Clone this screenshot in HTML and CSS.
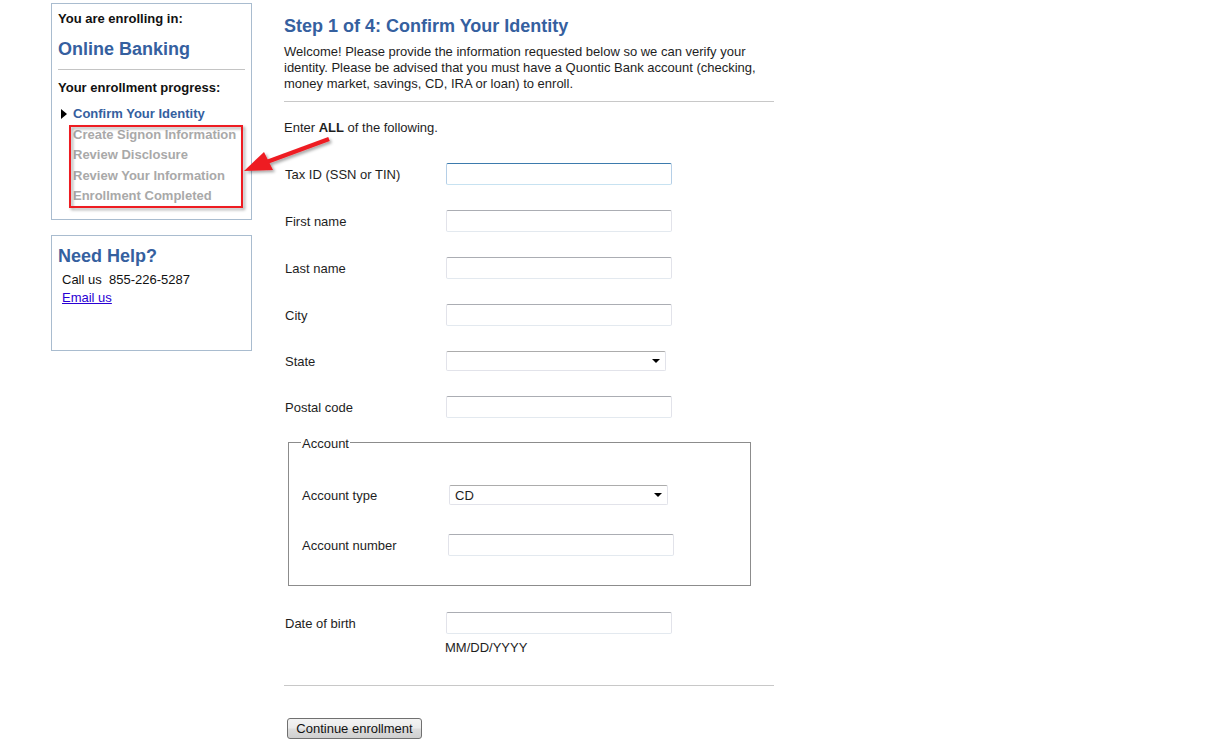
FILE: index.html
```html
<!DOCTYPE html>
<html>
<head>
<meta charset="utf-8">
<title>Enrollment - Confirm Your Identity</title>
<link rel="stylesheet" href="styles.css">
</head>
<body>
<div class="page">
  <aside class="sidebar">
    <div class="box progress-box">
      <div class="enroll-label">You are enrolling in:</div>
      <div class="product">Online Banking</div>
      <hr class="side-rule">
      <div class="progress-label">Your enrollment progress:</div>
      <ul class="steps">
        <li class="step current">Confirm Your Identity</li>
        <li class="step">Create Signon Information</li>
        <li class="step">Review Disclosure</li>
        <li class="step">Review Your Information</li>
        <li class="step">Enrollment Completed</li>
      </ul>
    </div>
    <div class="box help-box">
      <div class="help-title">Need Help?</div>
      <div class="help-line call">Call us&nbsp;&nbsp;855-226-5287</div>
      <div class="help-line"><a href="#" class="help-link">Email us</a></div>
    </div>
  </aside>

  <main class="main">
    <h1 class="title">Step 1 of 4: Confirm Your Identity</h1>
    <p class="intro">Welcome! Please provide the information requested below so we can verify your identity. Please be advised that you must have a Quontic Bank account (checking, money market, savings, CD, IRA or loan) to enroll.</p>
    <hr class="rule">
    <div class="enter">Enter <b>ALL</b> of the following.</div>

    <form class="form">
      <div class="row first">
        <label class="label">Tax ID (SSN or TIN)</label>
        <input class="text focus" type="text">
      </div>
      <div class="row">
        <label class="label">First name</label>
        <input class="text" type="text">
      </div>
      <div class="row">
        <label class="label">Last name</label>
        <input class="text" type="text">
      </div>
      <div class="row">
        <label class="label">City</label>
        <input class="text" type="text">
      </div>
      <div class="row">
        <label class="label">State</label>
        <div class="select state"><span class="select-value"></span><span class="caret"></span></div>
      </div>
      <div class="row">
        <label class="label">Postal code</label>
        <input class="text" type="text">
      </div>

      <fieldset class="account">
        <legend class="legend">Account</legend>
        <div class="frow first">
          <label class="flabel">Account type</label>
          <div class="select acct"><span class="select-value">CD</span><span class="caret"></span></div>
        </div>
        <div class="frow second">
          <label class="flabel">Account number</label>
          <input class="text acct-num" type="text">
        </div>
      </fieldset>

      <div class="row dob">
        <label class="label">Date of birth</label>
        <input class="text" type="text">
      </div>
      <div class="hint">MM/DD/YYYY</div>
      <hr class="rule bottom">
      <button type="button" class="btn">Continue enrollment</button>
    </form>
  </main>
</div>

<svg class="annotation" width="1208" height="750" viewBox="0 0 1208 750">
  <defs>
    <filter id="sh" x="-20%" y="-20%" width="140%" height="140%">
      <feDropShadow dx="2" dy="2" stdDeviation="1.5" flood-color="#000" flood-opacity="0.35"/>
    </filter>
  </defs>
  <g filter="url(#sh)">
    <rect x="70" y="126" width="172" height="81" fill="none" stroke="#ee1c24" stroke-width="2"/>
    <line x1="329" y1="139" x2="264" y2="163" stroke="#ee1c24" stroke-width="4.5"/>
    <polygon points="244,171 264,152 273,170" fill="#ee1c24"/>
  </g>
</svg>
</body>
</html>
```

FILE: styles.css
```css
html, body {
  margin: 0;
  padding: 0;
  background: #ffffff;
}

body {
  font-family: "Liberation Sans", Arial, sans-serif;
  font-size: 13px;
  color: #1e1e1e;
  position: relative;
  width: 1208px;
  height: 750px;
  overflow: hidden;
}

.page {
  display: flex;
  align-items: flex-start;
  padding-left: 51px;
  gap: 32px;
}

/* ---------- sidebar ---------- */
.sidebar {
  width: 201px;
  margin-top: 3px;
  display: flex;
  flex-direction: column;
  gap: 15px;
}

.box {
  border: 1px solid #a9bccf;
  box-sizing: border-box;
  width: 201px;
}

.progress-box {
  padding: 7px 6px 0 6px;
  height: 217px;
}

.enroll-label,
.progress-label {
  font-weight: bold;
  font-size: 13px;
  line-height: 15px;
  color: #111;
}

.product {
  margin-top: 12px;
  font-weight: bold;
  font-size: 18px;
  line-height: 22px;
  color: #35609f;
}

.side-rule {
  margin: 9px 0 0 0;
  border: 0;
  border-top: 1px solid #c4c4c4;
  height: 0;
}

.progress-label {
  margin-top: 10px;
}

.steps {
  list-style: none;
  margin: 9px 0 0 0;
  padding: 0 0 0 15px;
}

.step {
  position: relative;
  font-weight: bold;
  font-size: 13px;
  line-height: 20.5px;
  color: #a9a9a9;
  white-space: nowrap;
}

.step.current {
  color: #35609f;
}

.step.current::before {
  content: "";
  position: absolute;
  left: -12px;
  top: 5px;
  width: 0;
  height: 0;
  border-top: 5px solid transparent;
  border-bottom: 5px solid transparent;
  border-left: 6px solid #000;
}

.help-box {
  height: 116px;
  padding: 9px 6px 0 6px;
}

.help-title {
  font-weight: bold;
  font-size: 18px;
  line-height: 22px;
  color: #35609f;
}

.help-line {
  padding-left: 4px;
  font-size: 13px;
  line-height: 18px;
  color: #111;
}

.help-line.call {
  margin-top: 4px;
}

.help-link {
  color: #2a00d4;
  text-decoration: underline;
}

/* ---------- main ---------- */
.main {
  width: 490px;
}

.title {
  margin: 15px 0 0 0;
  font-size: 18px;
  line-height: 22px;
  font-weight: bold;
  color: #35609f;
}

.intro {
  margin: 7px 0 0 0;
  font-size: 13px;
  line-height: 16px;
  color: #1e1e1e;
}

.rule {
  margin: 9px 0 0 0;
  border: 0;
  border-top: 1px solid #c8c8c8;
  height: 0;
}

.enter {
  margin-top: 18px;
  line-height: 16px;
}

.form {
  margin: 0;
}

.row {
  display: flex;
  align-items: center;
  margin-top: 25px;
  padding-left: 1px;
}

.row.first {
  margin-top: 27px;
}

.label,
.flabel {
  flex: none;
  line-height: 16px;
  padding-top: 2px;
}

.label {
  width: 161px;
}

.flabel {
  width: 147px;
}

.text {
  box-sizing: border-box;
  width: 226px;
  height: 22px;
  margin: 0;
  padding: 0 3px;
  border: 1px solid #e2e3ea;
  border-top-color: #abadb3;
  border-bottom-color: #e3e9ef;
  border-radius: 2px;
  background: #fff;
  font-family: "Liberation Sans", Arial, sans-serif;
  font-size: 13px;
  outline: none;
}

.text.focus {
  border-color: #b5cfe7;
  border-top-color: #3d7bad;
  border-bottom-color: #c7e2f1;
}

.select {
  position: relative;
  box-sizing: border-box;
  width: 220px;
  height: 20px;
  border: 1px solid #e2e3ea;
  border-top-color: #acacac;
  border-radius: 2px;
  background: #fff;
  display: flex;
  align-items: center;
  padding: 1px 0 0 5px;
  font-size: 13px;
}

.select.acct {
  width: 219px;
}

.caret {
  position: absolute;
  right: 5px;
  top: 7px;
  width: 0;
  height: 0;
  border-left: 4px solid transparent;
  border-right: 4px solid transparent;
  border-top: 4px solid #000;
}

.account {
  box-sizing: border-box;
  width: 463px;
  margin: 14px 0 0 4px;
  padding: 0 13px 29px 13px;
  border: 1px solid #8c8c8c;
}

.legend {
  padding: 4px 1px 0 1px;
  margin-left: -1px;
  line-height: 16px;
  font-size: 13px;
}

.frow {
  display: flex;
  align-items: center;
}

.frow.first {
  margin-top: 33px;
}

.frow.second {
  margin-top: 29px;
}

.acct-num {
  margin-left: -1px;
}

.row.dob {
  margin-top: 26px;
}

.hint {
  margin: 6px 0 0 161px;
  line-height: 16px;
}

.rule.bottom {
  margin-top: 29px;
}

.btn {
  display: block;
  margin: 32px 0 0 3px;
  box-sizing: border-box;
  width: 135px;
  height: 21px;
  padding: 0;
  border: 1px solid #707070;
  border-radius: 3px;
  background: linear-gradient(#f3f3f3 0%, #ebebeb 48%, #dddddd 52%, #cfcfcf 100%);
  font-family: "Liberation Sans", Arial, sans-serif;
  font-size: 13px;
  color: #111;
}

/* ---------- annotation overlay ---------- */
.annotation {
  position: absolute;
  left: 0;
  top: 0;
  pointer-events: none;
}
```
